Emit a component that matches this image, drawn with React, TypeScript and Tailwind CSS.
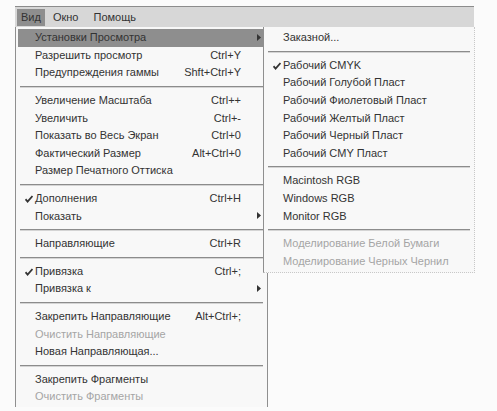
import React from "react";

type Item =
  | { sep: true }
  | {
      sep?: false;
      label: string;
      shortcut?: string;
      checked?: boolean;
      disabled?: boolean;
      arrow?: boolean;
      active?: boolean;
    };

const mainItems: Item[] = [
  { label: "Установки Просмотра", arrow: true, active: true },
  { label: "Разрешить просмотр", shortcut: "Ctrl+Y" },
  { label: "Предупреждения гаммы", shortcut: "Shft+Ctrl+Y" },
  { sep: true },
  { label: "Увеличение Масштаба", shortcut: "Ctrl++" },
  { label: "Увеличить", shortcut: "Ctrl+-" },
  { label: "Показать во Весь Экран", shortcut: "Ctrl+0" },
  { label: "Фактический Размер", shortcut: "Alt+Ctrl+0" },
  { label: "Размер Печатного Оттиска" },
  { sep: true },
  { label: "Дополнения", shortcut: "Ctrl+H", checked: true },
  { label: "Показать", arrow: true },
  { sep: true },
  { label: "Направляющие", shortcut: "Ctrl+R" },
  { sep: true },
  { label: "Привязка", shortcut: "Ctrl+;", checked: true },
  { label: "Привязка к", arrow: true },
  { sep: true },
  { label: "Закрепить Направляющие", shortcut: "Alt+Ctrl+;" },
  { label: "Очистить Направляющие", disabled: true },
  { label: "Новая Направляющая..." },
  { sep: true },
  { label: "Закрепить Фрагменты" },
  { label: "Очистить Фрагменты", disabled: true },
];

const subItems: Item[] = [
  { label: "Заказной..." },
  { sep: true },
  { label: "Рабочий CMYK", checked: true },
  { label: "Рабочий Голубой Пласт" },
  { label: "Рабочий Фиолетовый Пласт" },
  { label: "Рабочий Желтый Пласт" },
  { label: "Рабочий Черный Пласт" },
  { label: "Рабочий CMY Пласт" },
  { sep: true },
  { label: "Macintosh RGB" },
  { label: "Windows RGB" },
  { label: "Monitor RGB" },
  { sep: true },
  { label: "Моделирование Белой Бумаги", disabled: true },
  { label: "Моделирование Черных Чернил", disabled: true },
];

const Check = () => (
  <svg width="8" height="8" viewBox="0 0 8 8" className="absolute left-[7px] top-[5px]">
    <path d="M0.5 4.2 L2.6 6.6 L7.5 1" stroke="#333" strokeWidth="1.8" fill="none" />
  </svg>
);

const Separator = () => (
  <div className="h-[10px] flex items-center px-[4px]">
    <div className="w-full h-[2px] border-t border-[#8c8c8c] border-b-[#d4d4d4] border-b" />
  </div>
);

const Row = ({ item, rightPad }: { item: Exclude<Item, { sep: true }>; rightPad: string }) => (
  <div
    className={`relative h-[17.6px] mx-[2px] flex items-center justify-between pl-[17px] ${rightPad} ${
      item.active ? "bg-[#8e8e8e]" : ""
    } ${item.disabled ? "text-[#a5a5a5]" : "text-[#333333]"}`}
  >
    {item.checked && <Check />}
    <span>{item.label}</span>
    {item.shortcut && <span>{item.shortcut}</span>}
    {item.arrow && (
      <svg width="4" height="7" viewBox="0 0 4 7" className="absolute right-[4px] top-[5px]">
        <path d="M0 0 L4 3.5 L0 7 Z" fill="#333" />
      </svg>
    )}
  </div>
);

export default function App() {
  return (
    <div
      className="relative w-[497px] h-[411px] overflow-hidden bg-[#fbfbfb] text-[11px] leading-none"
      style={{ fontFamily: '"Liberation Sans", Arial, sans-serif' }}
    >
      {/* Menu bar */}
      <div className="mt-[6px] ml-[15px] w-[459px] h-[21px] border-t border-[#8c8c8c] bg-[#d7d7d7] flex items-center text-[#333333]">
        <div className="ml-[2px] h-[17px] px-[4px] flex items-center bg-[#8e8e8e]">Вид</div>
        <div className="ml-[7px] px-[1px]">Окно</div>
        <div className="ml-[14px]">Помощь</div>
      </div>

      {/* View menu */}
      <div className="absolute left-[15px] top-[27px] w-[253px] h-[380px] bg-[#f8f8f8] border-l border-r border-[#8f8f8f] pt-[2px]">
        {mainItems.map((item, i) =>
          item.sep ? <Separator key={i} /> : <Row key={i} item={item} rightPad="pr-[24px]" />
        )}
      </div>

      {/* Proof setup submenu */}
      <div className="absolute left-[263px] top-[27px] w-[212px] h-[246px] bg-[#f8f8f8] border-l border-[#8f8f8f] border-r border-b border-r-[#c8c8c8] border-b-[#c8c8c8] border-dotted [border-left-style:solid] pt-[2px]">
        {subItems.map((item, i) =>
          item.sep ? <Separator key={i} /> : <Row key={i} item={item} rightPad="pr-[8px]" />
        )}
      </div>
    </div>
  );
}
